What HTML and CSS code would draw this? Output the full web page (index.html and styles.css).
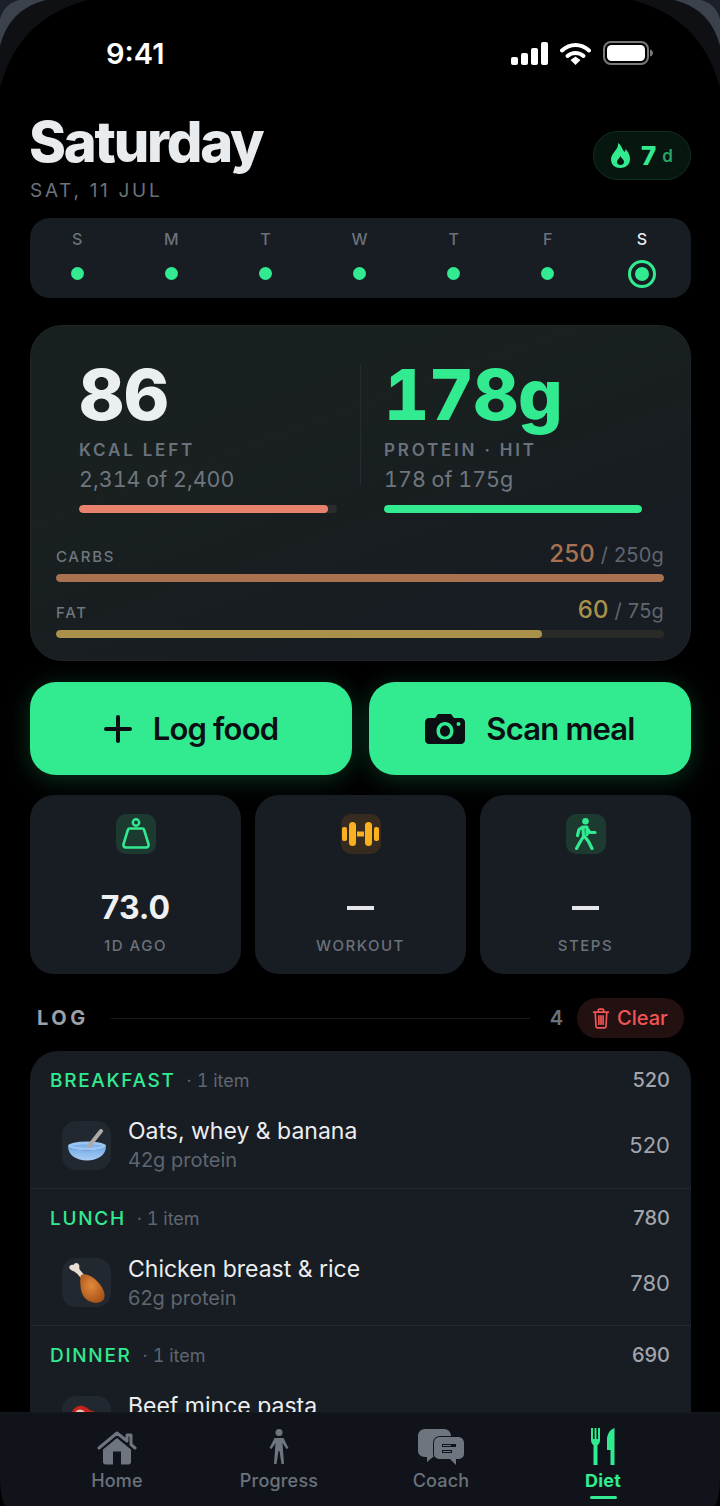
FILE: index.html

```html
<!DOCTYPE html>
<html lang="en">

<head>
    <meta charset="UTF-8">
    <meta name="viewport" content="width=device-width, initial-scale=1.0">
    <title>Diet</title>
    <link rel="stylesheet" href="styles.css">
</head>

<body>
    <div class="phone">
        <svg class="corner corner-left" width="110" height="110" viewBox="0 0 110 110">
            <path d="M0 0H88Q18 18 0 88Z" fill="#0e1013" />
            <path d="M0 0H46Q9 9 0 46Z" fill="#3c424c" />
            <path d="M0 0H19Q4 4 0 19Z" fill="#1b1f27" />
        </svg>
        <svg class="corner corner-right" width="110" height="110" viewBox="0 0 110 110">
            <path d="M0 0H88Q18 18 0 88Z" fill="#0e1013" />
            <path d="M0 0H46Q9 9 0 46Z" fill="#3c424c" />
            <path d="M0 0H19Q4 4 0 19Z" fill="#1b1f27" />
        </svg>

        <div class="status">
            <span class="time">9:41</span>
            <div class="status-icons">
                <svg width="37" height="23" viewBox="0 0 37 23">
                    <rect x="0" y="15" width="7" height="8" rx="2" fill="#fff" />
                    <rect x="10" y="11" width="7" height="12" rx="2" fill="#fff" />
                    <rect x="20" y="6" width="7" height="17" rx="2" fill="#fff" />
                    <rect x="30" y="0" width="7" height="23" rx="2" fill="#fff" />
                </svg>
                <svg width="31" height="23" viewBox="0 0 31 23">
                    <path d="M2 8.500C10 1 21 1 29 8.500" fill="none" stroke="#fff" stroke-width="4" stroke-linecap="round" />
                    <path d="M7.500 14C12 10 19 10 23.500 14" fill="none" stroke="#fff" stroke-width="4" stroke-linecap="round" />
                    <path d="M10.500 18L15.500 14.500L20.500 18L15.500 23Z" fill="#fff" />
                </svg>
                <svg width="50" height="24" viewBox="0 0 50 24">
                    <rect x="1" y="1" width="44" height="22" rx="7" fill="none" stroke="#77797c" stroke-width="2" />
                    <rect x="4" y="4" width="38" height="16" rx="4.500" fill="#fff" />
                    <path d="M47 8.500C49 9 50 10.500 50 12C50 13.500 49 15 47 15.500Z" fill="#77797c" />
                </svg>
            </div>
        </div>

        <main class="content">
            <header class="head">
                <div>
                    <h1>Saturday</h1>
                    <p class="date">SAT, 11 JUL</p>
                </div>
                <div class="streak">
                    <svg width="19" height="25" viewBox="0 0 19 25">
                        <path fill-rule="evenodd" d="M7 0C9.500 1.500 10.500 4 11.500 6C12 7.500 13 8.500 14 9C14.500 8 14.500 7 14.500 6C17 8.500 19 12 19 16C19 21.500 15 25 9.500 25C4 25 0 21.500 0 16.500C0 13 2 10.500 4 8C5.800 5.800 7.500 3.500 7 0ZM9.500 13C9 15 6 16.500 6 19C6 21 7.500 22 9.500 22C11.500 22 13 21 13 19C13 16.500 10.500 15.500 9.500 13Z" fill="#32ea90" />
                    </svg>
                    <span class="streak-num">7</span>
                    <span class="streak-unit">d</span>
                </div>
            </header>

            <section class="week">
                <div class="day"><span>S</span><i class="dot"></i></div>
                <div class="day"><span>M</span><i class="dot"></i></div>
                <div class="day"><span>T</span><i class="dot"></i></div>
                <div class="day"><span>W</span><i class="dot"></i></div>
                <div class="day"><span>T</span><i class="dot"></i></div>
                <div class="day"><span>F</span><i class="dot"></i></div>
                <div class="day today"><span>S</span><i class="dot"></i></div>
            </section>

            <section class="hero">
                <div class="hero-top">
                    <div class="hero-col">
                        <div class="big">86</div>
                        <div class="hero-label">KCAL LEFT</div>
                        <div class="hero-sub">2,314 of 2,400</div>
                        <div class="bar bar-kcal"><div class="fill" style="width: 96.4%"></div></div>
                    </div>
                    <div class="hero-col second">
                        <div class="big green">178g</div>
                        <div class="hero-label">PROTEIN · HIT</div>
                        <div class="hero-sub">178 of 175g</div>
                        <div class="bar bar-protein"><div class="fill" style="width: 100%"></div></div>
                    </div>
                </div>
                <div class="macro">
                    <div class="macro-row">
                        <span class="macro-name">CARBS</span>
                        <span class="macro-val"><b class="carbs">250</b> / 250g</span>
                    </div>
                    <div class="bar bar-carbs"><div class="fill" style="width: 100%"></div></div>
                </div>
                <div class="macro">
                    <div class="macro-row">
                        <span class="macro-name">FAT</span>
                        <span class="macro-val"><b class="fat">60</b> / 75g</span>
                    </div>
                    <div class="bar bar-fat"><div class="fill" style="width: 80%"></div></div>
                </div>
            </section>

            <section class="actions">
                <button class="action">
                    <svg width="28" height="28" viewBox="0 0 28 28">
                        <path d="M14 2V26M2 14H26" stroke="#0b0f14" stroke-width="4" stroke-linecap="round" />
                    </svg>
                    <span>Log food</span>
                </button>
                <button class="action">
                    <svg width="40" height="30" viewBox="0 0 40 30">
                        <path fill-rule="evenodd" d="M13 0H26L29 4H36C38.200 4 40 5.800 40 8V26C40 28.200 38.200 30 36 30H4C1.800 30 0 28.200 0 26V8C0 5.800 1.800 4 4 4H10ZM20 8C15 8 11.500 12 11.500 17C11.500 22 15 25.500 20 25.500C25 25.500 28.500 22 28.500 17C28.500 12 25 8 20 8ZM20 11.500C23 11.500 25 14 25 17C25 20 23 22.500 20 22.500C17 22.500 15 20 15 17C15 14 17 11.500 20 11.500ZM33.500 8A2 2 0 1 0 33.500 12A2 2 0 1 0 33.500 8Z" fill="#0b0f14" />
                    </svg>
                    <span>Scan meal</span>
                </button>
            </section>

            <section class="stats">
                <div class="stat">
                    <div class="stat-icon green-tile">
                        <svg width="30" height="32" viewBox="0 0 30 32">
                            <circle cx="15" cy="4.500" r="3.200" fill="none" stroke="#32ea90" stroke-width="2.400" />
                            <path d="M8.500 10.500H21.500C22.300 10.500 22.800 11 23 11.500L27.500 26C28 28 27 29.500 25 29.500H5C3 29.500 2 28 2.500 26L7 11.500C7.200 11 7.700 10.500 8.500 10.500Z" fill="none" stroke="#32ea90" stroke-width="2.600" />
                        </svg>
                    </div>
                    <div class="stat-num">73.0</div>
                    <div class="stat-label">1D AGO</div>
                </div>
                <div class="stat">
                    <div class="stat-icon amber-tile">
                        <svg width="37" height="24" viewBox="0 0 37 24">
                            <rect x="0" y="5" width="5" height="14" rx="2" fill="#fbb01f" />
                            <rect x="7" y="0" width="7" height="24" rx="3.500" fill="#fbb01f" />
                            <rect x="15" y="9.500" width="7" height="5" fill="#fbb01f" />
                            <rect x="23" y="0" width="7" height="24" rx="3.500" fill="#fbb01f" />
                            <rect x="32" y="5" width="5" height="14" rx="2" fill="#fbb01f" />
                        </svg>
                    </div>
                    <div class="stat-num dash"></div>
                    <div class="stat-label">WORKOUT</div>
                </div>
                <div class="stat">
                    <div class="stat-icon green-tile">
                        <svg width="22" height="32" viewBox="0 0 22 32">
                            <circle cx="10.500" cy="3.300" r="3.300" fill="#32ea90" />
                            <path d="M7 9.500L4 11.500L2.500 17.500M7.500 9H12L12 16.500M12 10.500L15 14.500H20M8 9.500L8.500 18.500L4.500 25L1.500 30.500M10 19L13.500 23.500L17 30.500" fill="none" stroke="#32ea90" stroke-width="3.200" stroke-linecap="round" stroke-linejoin="round" />
                        </svg>
                    </div>
                    <div class="stat-num dash"></div>
                    <div class="stat-label">STEPS</div>
                </div>
            </section>

            <div class="log-head">
                <span class="log-title">LOG</span>
                <span class="log-line"></span>
                <span class="log-count">4</span>
                <button class="clear">
                    <svg width="18" height="21" viewBox="0 0 16 20">
                        <path d="M1 4H15M5.500 4V2C5.500 1.400 5.900 1 6.500 1H9.500C10.100 1 10.500 1.400 10.500 2V4M2.500 4L3.200 17.500C3.300 18.400 4 19 4.800 19H11.200C12 19 12.700 18.400 12.800 17.500L13.500 4M6 7.500V15.500M8 7.500V15.500M10 7.500V15.500" fill="none" stroke="#f25555" stroke-width="1.600" stroke-linecap="round" />
                    </svg>
                    <span>Clear</span>
                </button>
            </div>

            <section class="log">
                <div class="meal">
                    <div class="meal-head">
                        <span class="meal-name">BREAKFAST</span>
                        <span class="meal-count">· 1 item</span>
                        <span class="meal-kcal">520</span>
                    </div>
                    <div class="item">
                        <div class="thumb">
                            <svg width="40" height="32" viewBox="0 0 40 32">
                                <defs>
                                    <linearGradient id="bowl" x1="0" y1="0" x2="0" y2="1">
                                        <stop offset="0" stop-color="#6fa8e8" />
                                        <stop offset="1" stop-color="#a9cef3" />
                                    </linearGradient>
                                </defs>
                                <ellipse cx="20" cy="17" rx="19" ry="4.500" fill="#9cc6f2" />
                                <path d="M4 17C10 14.500 30 14.500 36 17C30 19 10 19 4 17Z" fill="#7fb2ec" />
                                <path d="M22 17L34 2" stroke="#b0aaa6" stroke-width="4" stroke-linecap="round" />
                                <path d="M1 17.500C1 26 9.500 31.500 20 31.500C30.500 31.500 39 26 39 17.500C33 22.500 7 22.500 1 17.500Z" fill="url(#bowl)" />
                            </svg>
                        </div>
                        <div class="item-text">
                            <div class="item-name">Oats, whey &amp; banana</div>
                            <div class="item-sub">42g protein</div>
                        </div>
                        <span class="item-kcal">520</span>
                    </div>
                </div>
                <div class="meal">
                    <div class="meal-head">
                        <span class="meal-name">LUNCH</span>
                        <span class="meal-count">· 1 item</span>
                        <span class="meal-kcal">780</span>
                    </div>
                    <div class="item">
                        <div class="thumb">
                            <svg width="38" height="42" viewBox="0 0 38 42">
                                <defs>
                                    <radialGradient id="leg" cx="0.450" cy="0.400" r="0.700">
                                        <stop offset="0" stop-color="#e08a3c" />
                                        <stop offset="1" stop-color="#a34c14" />
                                    </radialGradient>
                                </defs>
                                <path d="M9 8L15 15" stroke="#e8dfd2" stroke-width="4.500" />
                                <path d="M1.500 6.500C0.500 4 3 2 5.500 3C6 1 9 0 10.500 2C12 4 11 6 11.500 9C11.800 11 9 12 7.500 10.500C6.500 9 3 9 1.500 6.500Z" fill="#e8dfd2" />
                                <path d="M13 13C17 11 23 13 29 19C35 25 38 32 36 37C34 41 27 42 21 39C15 36 13 30 12.500 24C12.300 20 12 15 13 13Z" fill="url(#leg)" />
                            </svg>
                        </div>
                        <div class="item-text">
                            <div class="item-name">Chicken breast &amp; rice</div>
                            <div class="item-sub">62g protein</div>
                        </div>
                        <span class="item-kcal">780</span>
                    </div>
                </div>
                <div class="meal">
                    <div class="meal-head">
                        <span class="meal-name">DINNER</span>
                        <span class="meal-count">· 1 item</span>
                        <span class="meal-kcal">690</span>
                    </div>
                    <div class="item">
                        <div class="thumb">
                            <svg width="38" height="38" viewBox="0 0 38 38">
                                <path d="M2 22C1 10 8 3 15 5C19 6 21 9 24 10C32 12 38 17 36 27C34 36 4 36 2 22Z" fill="#c4241c" />
                                <path d="M8 12C10 9 14 9 16 12M20 14C24 13 28 16 30 18" fill="none" stroke="#ecc1b6" stroke-width="2.500" />
                            </svg>
                        </div>
                        <div class="item-text">
                            <div class="item-name">Beef mince pasta</div>
                            <div class="item-sub">58g protein</div>
                        </div>
                        <span class="item-kcal">690</span>
                    </div>
                </div>
            </section>
        </main>

        <nav class="tabs">
            <div class="tab">
                <svg width="40" height="34" viewBox="0 0 40 34">
                    <path d="M2 17L20 2L30 10V4H34V13.500L38 17" fill="none" stroke="#6f757e" stroke-width="3" stroke-linecap="round" stroke-linejoin="round" />
                    <path fill-rule="evenodd" d="M20 7L34 18.500V31C34 32.500 33 33.500 31.500 33.500H8.500C7 33.500 6 32.500 6 31V18.500ZM16 20.500V33.500H24V20.500Z" fill="#6f757e" />
                </svg>
                <span>Home</span>
            </div>
            <div class="tab">
                <svg width="22" height="36" viewBox="0 0 22 36">
                    <circle cx="11" cy="3.500" r="3.500" fill="#6f757e" />
                    <path d="M6.500 9H15.500L20.500 19L18.500 20L14.500 14L16 35H13.500L11.500 22H10.500L8.500 35H6L7.500 14L3.500 20L1.500 19Z" fill="#6f757e" />
                </svg>
                <span>Progress</span>
            </div>
            <div class="tab">
                <svg width="46" height="36" viewBox="0 0 46 36">
                    <path d="M7 0H26C30 0 33 3 33 7V22C33 26 30 28 26 28H15L9 33V28H7C3 28 0 25 0 22V7C0 3 3 0 7 0Z" fill="#6f757e" />
                    <path fill-rule="evenodd" d="M22 8H40C43 8 46 10 46 14V25C46 28.500 43 30 40 30H38V36L32 30H22C19 30 16 28.500 16 25V14C16 10 19 8 22 8ZM24 15V18H38V15ZM24 21V24H34V21Z" fill="#6f757e" stroke="#10141a" stroke-width="2" paint-order="stroke" />
                </svg>
                <span>Coach</span>
            </div>
            <div class="tab active">
                <svg width="24" height="37" viewBox="0 0 24 37">
                    <path fill-rule="evenodd" d="M0 0H2V11H3.500V0H5.500V11H7V0H9V12C9 15 7.500 16.500 6.500 17V37H2.500V17C1.500 16.500 0 15 0 12Z" fill="#32ea90" />
                    <path d="M23.500 0V37H19.500V22H16V12C16 6 19 1.500 23.500 0Z" fill="#32ea90" />
                </svg>
                <span>Diet</span>
                <i class="tab-line"></i>
            </div>
        </nav>
    </div>
</body>

</html>
```

FILE: styles.css

```css
* {
    box-sizing: border-box;
}

html,
body {
    margin: 0;
    background: #000;
}

body {
    font-family: Inter, "Liberation Sans", sans-serif;
    color: #e9ecef;
}

.phone {
    position: relative;
    width: 720px;
    height: 1506px;
    overflow: hidden;
    background: #000;
}

.corner {
    position: absolute;
    top: 0;
}

.corner-left {
    left: 0;
}

.corner-right {
    right: 0;
    transform: scaleX(-1);
}

.status {
    position: relative;
    display: flex;
    justify-content: space-between;
    align-items: center;
    height: 34px;
    margin-top: 36px;
    padding: 0 67px 0 106px;
}

.time {
    font-size: 29px;
    font-weight: 600;
    color: #fff;
}

.status-icons {
    display: flex;
    align-items: center;
    gap: 12px;
}

.content {
    padding: 0 29px 0 30px;
}

.head {
    display: flex;
    justify-content: space-between;
    align-items: flex-start;
    margin-top: 40px;
}

h1 {
    margin: 2px 0 0 -1px;
    font-size: 56px;
    line-height: 60px;
    font-weight: 800;
    letter-spacing: -2.200px;
    color: #e9ecef;
}

.date {
    margin: 7px 0 0;
    font-size: 19px;
    line-height: 24px;
    letter-spacing: 2.700px;
    color: #6b727c;
}

.streak {
    display: flex;
    align-items: center;
    height: 49px;
    width: 98px;
    margin-top: 21px;
    padding-left: 17px;
    border: 1px solid #10301f;
    border-radius: 25px;
    background: #07160f;
    color: #32ea90;
}

.streak-num {
    margin-left: 11px;
    font-size: 26px;
    font-weight: 800;
}

.streak-unit {
    margin-left: 6px;
    font-size: 17px;
    font-weight: 600;
    color: #24a566;
}

.week {
    display: grid;
    grid-template-columns: repeat(7, 1fr);
    height: 80px;
    margin-top: 15px;
    padding-right: 2px;
    border-radius: 20px;
    background: #181c23;
}

.day {
    display: flex;
    flex-direction: column;
    align-items: center;
    font-size: 16px;
    font-weight: 500;
    color: #6b727c;
    padding-top: 11px;
}

.day span {
    line-height: 20px;
}

.dot {
    width: 13px;
    height: 13px;
    margin-top: 18px;
    border-radius: 50%;
    background: #32ea90;
}

.today {
    color: #e9ecef;
}

.today .dot {
    width: 14px;
    height: 14px;
    outline: 3px solid #32ea90;
    outline-offset: 4px;
}

.hero {
    height: 336px;
    margin-top: 27px;
    padding: 26px 26px 0 25px;
    border: 1px solid #1f2429;
    border-radius: 32px;
    background: linear-gradient(160deg, #18201f 0%, #19201f 35%, #181c23 80%);
}

.hero-top {
    display: flex;
    height: 162px;
}

.hero-col {
    flex: 1;
    padding: 9px 23px 0;
}

.second {
    position: relative;
    padding-left: 24px;
    padding-right: 22px;
}

.second::before {
    content: "";
    position: absolute;
    left: 0;
    top: 13px;
    height: 120px;
    width: 1px;
    background: #252b31;
}

.big {
    font-size: 70px;
    line-height: 68px;
    font-weight: 800;
    font-variant-numeric: tabular-nums;
    letter-spacing: -0.500px;
    color: #eceff2;
}

.green {
    color: #32ea90;
}

.hero-label {
    margin-top: 10px;
    font-size: 17px;
    line-height: 22px;
    font-weight: 600;
    letter-spacing: 2.800px;
    color: #6b727c;
}

.hero-sub {
    margin-top: 4px;
    font-size: 21.500px;
    line-height: 28px;
    font-variant-numeric: tabular-nums;
    color: #6f767f;
}

.bar {
    height: 8px;
    border-radius: 4px;
    overflow: hidden;
}

.hero-col .bar {
    margin-top: 12px;
}

.fill {
    height: 100%;
    border-radius: 4px;
}

.bar-kcal {
    background: #2c2b2d;
}

.bar-kcal .fill {
    background: #e9826c;
}

.bar-protein {
    background: #1c3a2c;
}

.bar-protein .fill {
    background: #32ea90;
}

.macro {
    margin-bottom: 13px;
}

.hero-top + .macro {
    margin-top: 25px;
}

.macro-row {
    display: flex;
    justify-content: space-between;
    align-items: baseline;
    line-height: 30px;
}

.macro-name {
    font-size: 15px;
    font-weight: 500;
    letter-spacing: 1.700px;
    color: #6f767f;
}

.macro-val {
    font-size: 20px;
    letter-spacing: 0.200px;
    color: #5f666f;
}

.macro-val b {
    font-size: 24px;
    font-weight: 500;
}

.carbs {
    color: #a87250;
}

.fat {
    color: #a9914a;
}

.bar-carbs {
    margin-top: 2px;
    background: #2e2a29;
}

.bar-carbs .fill {
    background: #a87250;
}

.bar-fat {
    margin-top: 2px;
    background: #2a2a26;
}

.bar-fat .fill {
    background: #a9914a;
}

.actions {
    display: flex;
    gap: 17px;
    margin-top: 21px;
}

.action {
    flex: 1;
    display: flex;
    justify-content: center;
    align-items: center;
    gap: 21px;
    height: 93px;
    border: none;
    border-radius: 26px;
    background: #32ea90;
    box-shadow: 0 4px 24px rgba(50, 234, 144, 0.22);
    font-family: inherit;
    font-size: 31px;
    font-weight: 600;
    letter-spacing: -0.800px;
    color: #0b0f14;
}

.stats {
    display: flex;
    gap: 14px;
    margin-top: 20px;
}

.stat {
    flex: 1;
    display: flex;
    flex-direction: column;
    align-items: center;
    height: 179px;
    padding-top: 19px;
    border-radius: 24px;
    background: #181c23;
}

.stat-icon {
    display: flex;
    justify-content: center;
    align-items: center;
    width: 40px;
    height: 40px;
    border-radius: 10px;
}

.green-tile {
    background: #1c3a30;
}

.amber-tile {
    background: #372b1f;
}

.stat-num {
    margin-top: 32px;
    height: 44px;
    font-size: 32px;
    line-height: 44px;
    font-weight: 700;
    color: #eef0f2;
}

.dash {
    position: relative;
    width: 27px;
}

.dash::before {
    content: "";
    position: absolute;
    left: 0;
    top: 20px;
    width: 27px;
    height: 4px;
    background: #e4e6e9;
}

.stat-label {
    margin-top: 6px;
    font-size: 15px;
    line-height: 20px;
    font-weight: 500;
    letter-spacing: 1.500px;
    color: #6b727c;
}

.log-head {
    display: flex;
    align-items: center;
    height: 40px;
    margin-top: 24px;
    padding: 0 7px;
}

.log-title {
    font-size: 20px;
    font-weight: 700;
    letter-spacing: 3.500px;
    color: #9aa0a8;
}

.log-line {
    flex: 1;
    height: 1px;
    margin: 0 20px 0 22px;
    background: #181b20;
}

.log-count {
    font-size: 20px;
    font-weight: 600;
    color: #6b727c;
    margin-right: 14px;
}

.clear {
    display: flex;
    align-items: center;
    gap: 7px;
    height: 40px;
    width: 107px;
    padding-left: 15px;
    border: none;
    border-radius: 20px;
    background: #231112;
    font-family: inherit;
    font-size: 20px;
    font-weight: 500;
    color: #f25555;
}

.log {
    margin-top: 13px;
    border-radius: 28px 28px 0 0;
    background: #181c23;
}

.meal {
    height: 137.500px;
    padding: 14px 21px 0 20px;
    border-bottom: 1px solid #24282f;
}

.meal-head {
    display: flex;
    align-items: baseline;
    line-height: 30px;
}

.meal-name {
    font-size: 19px;
    font-weight: 500;
    letter-spacing: 1.700px;
    color: #32ea90;
}

.meal-count {
    margin-left: 11px;
    font-size: 18px;
    font-variant-numeric: tabular-nums;
    color: #5f666f;
}

.meal-kcal {
    margin-left: auto;
    font-size: 20px;
    font-weight: 500;
    color: #a0a5ac;
}

.item {
    display: flex;
    align-items: center;
    margin-top: 20px;
    padding-left: 12px;
}

.thumb {
    display: flex;
    justify-content: center;
    align-items: center;
    flex: none;
    width: 49px;
    height: 49px;
    border-radius: 14px;
    background: #222830;
    overflow: hidden;
}

.item-text {
    flex: 1;
    margin-left: 17px;
}

.item-name {
    font-size: 23px;
    line-height: 30px;
    color: #eceef0;
}

.item-sub {
    font-size: 20px;
    line-height: 28px;
    color: #5f666f;
}

.item-kcal {
    font-size: 22px;
    color: #a0a5ac;
}

.tabs {
    position: absolute;
    left: 0;
    right: 0;
    bottom: 0;
    height: 94px;
    display: grid;
    grid-template-columns: repeat(4, 1fr);
    padding: 0 36px;
    border-top: 1px solid #15191e;
    border-radius: 0 0 6px 6px / 0 0 30px 30px;
    background: #10141a;
}

.tab {
    position: relative;
    display: flex;
    flex-direction: column;
    align-items: center;
    justify-content: flex-end;
    height: 81px;
    font-size: 18px;
    font-weight: 500;
    letter-spacing: 0.200px;
    color: #6b727c;
}

.tab span {
    line-height: 26px;
    margin-top: 3px;
}

.active {
    color: #32ea90;
    font-weight: 700;
}

.tab-line {
    position: absolute;
    bottom: -5px;
    width: 27px;
    height: 3px;
    border-radius: 2px;
    background: #32ea90;
}
```
